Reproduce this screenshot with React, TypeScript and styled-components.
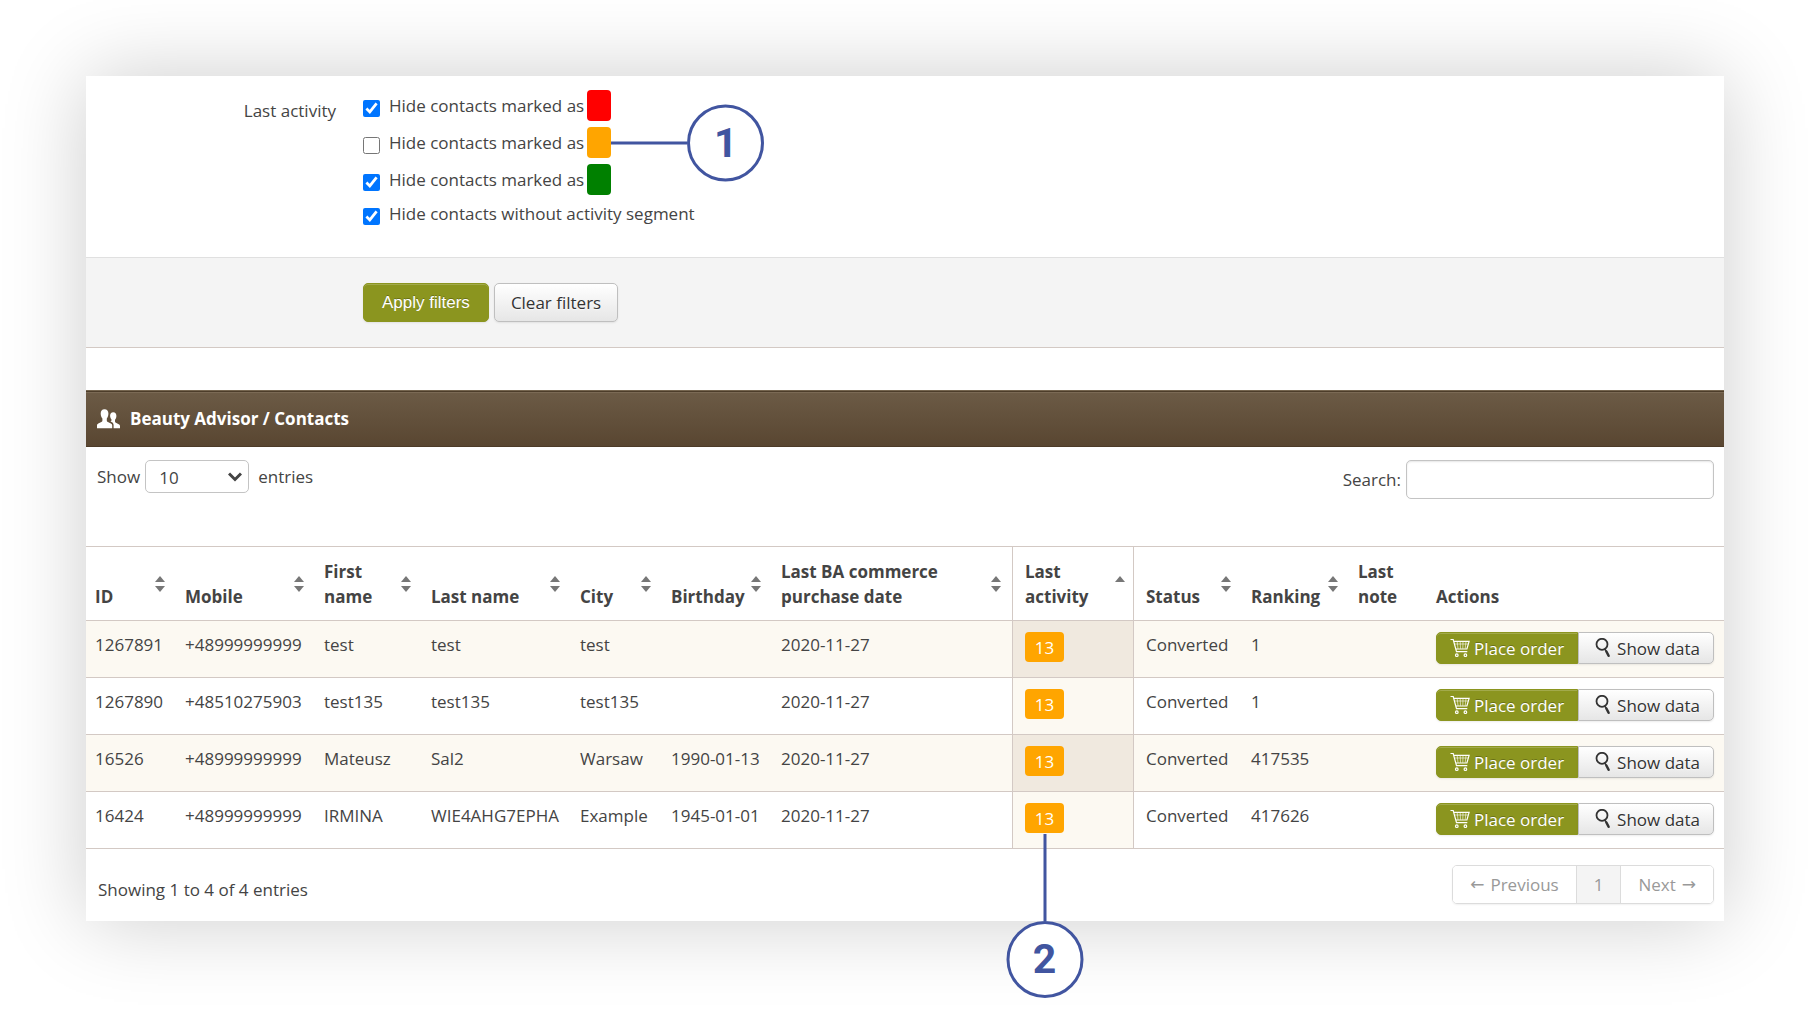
import React from "react";
import styled, { createGlobalStyle, css } from "styled-components";

const line = "#d3c9c4";
const olive = "#8b951f";
const callout = "#4155a0";

const GlobalStyle = createGlobalStyle`
  *, *::before, *::after { box-sizing: border-box; }
  body {
    margin: 0;
    background: #fff;
    color: #444;
    font-family: "Open Sans", "Noto Sans", sans-serif;
    font-size: 17px;
    line-height: 25px;
  }
  button, input, select { font: inherit; color: inherit; margin: 0; }
`;

const Page = styled.main`
  padding: 76px 92px 92px 86px;
`;

const Panel = styled.div`
  background: #fff;
  box-shadow: 0 0 80px rgba(0, 0, 0, 0.2);
`;

const FilterFields = styled.fieldset`
  display: flex;
  gap: 27px;
  margin: 0;
  padding: 14px 0 31px;
  border: 0;
`;

const FieldName = styled.span`
  width: 250px;
  padding-top: 8px;
  text-align: right;
`;

const Options = styled.div`
  display: flex;
  flex-direction: column;
  gap: 6px;
`;

const Option = styled.div`
  display: flex;
  align-items: center;
  gap: 3px;
`;

const OptionLabel = styled.label`
  display: flex;
  align-items: center;
  gap: 9px;
`;

const Checkbox = styled.input`
  width: 17px;
  height: 17px;
  && { margin-top: 5px; }
  accent-color: #0075ff;
`;

const Swatch = styled.span<{ $color: string }>`
  position: relative;
  width: 24px;
  height: 31px;
  border-radius: 4px;
  background: ${(p) => p.$color};
`;

const FilterActions = styled.div`
  display: flex;
  gap: 5px;
  padding: 25px 0 25px 277px;
  border-top: 1px solid #e0e0e0;
  border-bottom: 1px solid ${line};
  background: #f4f4f4;
`;

const greenButton = css`
  border: 1px solid ${olive};
  background: ${olive};
  color: #fff;
  text-shadow: 0 -1px 0 rgba(0, 0, 0, 0.25);
  box-shadow: inset 0 1px 0 rgba(255, 255, 255, 0.2), 0 1px 2px rgba(0, 0, 0, 0.08);
`;

const greyButton = css`
  border: 1px solid #bfbfbf;
  background: linear-gradient(#fff, #e6e6e6);
  color: #333;
  text-shadow: 0 1px 1px rgba(255, 255, 255, 0.75);
  box-shadow: 0 1px 2px rgba(0, 0, 0, 0.08);
`;

const FilterButton = styled.button<{ $primary?: boolean }>`
  height: 39px;
  padding: 0 16px;
  border-radius: 5px;
  ${(p) => (p.$primary ? greenButton : greyButton)}
  ${(p) => p.$primary && css`
    padding: 0 18px;
    font-family: "Liberation Sans", Arial, sans-serif;
  `}
`;

const TitleBar = styled.header`
  display: flex;
  align-items: center;
  gap: 10px;
  height: 57px;
  margin-top: 42px;
  padding: 0 11px;
  border-top: 1px solid #75654f;
  border-bottom: 1px solid #4d3b28;
  background: linear-gradient(#6c5b46, #594631);
  box-shadow: inset 0 1px 0 #4d3d2a, inset 0 2px 0 #7b6a55;
  color: #fff;
`;

const Title = styled.h2`
  margin: 0;
  font-size: 17px;
  font-weight: 700;
`;

const Controls = styled.div`
  display: flex;
  align-items: flex-start;
  justify-content: space-between;
  padding: 13px 10px 47px 11px;
`;

const LengthControl = styled.label`
  display: flex;
  align-items: center;
  gap: 5px;
`;

const SelectBox = styled.span`
  position: relative;
  margin-right: 4px;

  svg {
    position: absolute;
    top: 12px;
    right: 7px;
    pointer-events: none;
  }
`;

const Select = styled.select`
  display: block;
  width: 104px;
  height: 33px;
  padding: 2px 13px 0;
  appearance: none;
  border: 1px solid #c4c4c4;
  border-radius: 5px;
  background: #fff;
`;

const SearchControl = styled.label`
  display: flex;
  align-items: center;
  gap: 5px;
`;

const SearchInput = styled.input`
  width: 308px;
  height: 39px;
  padding: 0 8px;
  border: 1px solid #c4c4c4;
  border-radius: 5px;
  background: #fff;
  box-shadow: inset 0 1px 2px rgba(0, 0, 0, 0.1);
`;

const Table = styled.table`
  width: 100%;
  table-layout: fixed;
  border-collapse: separate;
  border-spacing: 0;
  border-bottom: 1px solid ${line};
`;

type CellProps = { $sorted?: boolean; $afterSorted?: boolean };

const cellEdges = css<CellProps>`
  ${(p) => p.$sorted && css`
    padding-left: 12px;
    padding-right: 8px;
    border-left: 1px solid ${line};
    border-right: 1px solid ${line};
  `}
  ${(p) => p.$afterSorted && css`padding-left: 12px;`}
`;

const HeadCell = styled.th<CellProps>`
  padding: 12px 11px 11px 9px;
  border-top: 1px solid ${line};
  font-weight: 700;
  text-align: left;
  ${cellEdges}
`;

const HeadContent = styled.div`
  display: flex;
  align-items: center;
  justify-content: space-between;
  height: 50px;

  svg { flex: none; }
`;

const HeadLabel = styled.span`
  align-self: flex-end;
`;

const Cell = styled.td<CellProps>`
  padding: 11px 0 13px 9px;
  border-top: 1px solid ${line};
  vertical-align: top;
  ${cellEdges}
`;

const Row = styled.tr`
  &:nth-child(odd) ${Cell} {
    background: #fcf9f2;
  }
  ${Cell}:nth-child(8) {
    background: #fcf9f2;
  }
  &:nth-child(odd) ${Cell}:nth-child(8) {
    background: #f0e9df;
  }
`;

const Badge = styled.span`
  position: relative;
  display: block;
  width: 39px;
  height: 30px;
  padding-top: 3px;
  border-radius: 4px;
  background: orange;
  color: #fff;
  text-align: center;
`;

const RowActions = styled.div`
  display: flex;
  justify-content: flex-end;
  padding-right: 10px;
`;

const ActionButton = styled.button<{ $primary?: boolean }>`
  display: flex;
  align-items: center;
  gap: ${(p) => (p.$primary ? "4px" : "6px")};
  height: 32px;
  padding: ${(p) => (p.$primary ? "0 13px" : "0 13px 0 15px")};
  white-space: nowrap;
  ${(p) => (p.$primary ? greenButton : greyButton)}
  border-radius: ${(p) => (p.$primary ? "5px 0 0 5px" : "0 5px 5px 0")};
`;

const Footer = styled.footer`
  display: flex;
  align-items: flex-start;
  justify-content: space-between;
  padding: 16px 10px 17px 12px;
`;

const Summary = styled.p`
  margin: 0;
  padding-top: 12px;
`;

const Pager = styled.nav`
  display: flex;
  border: 1px solid #dcdcdc;
  border-radius: 5px;
  box-shadow: 0 1px 2px rgba(0, 0, 0, 0.06);
  overflow: hidden;
`;

const PageButton = styled.button<{ $current?: boolean }>`
  display: flex;
  align-items: center;
  gap: 6px;
  height: 37px;
  padding: 0 17px;
  border: 0;
  background: ${(p) => (p.$current ? "#f4f4f4" : "#fff")};
  && { color: #999; }

  & + & { border-left: 1px solid #dcdcdc; }
`;

const Arrow = styled.span`
  font-family: "DejaVu Sans", sans-serif;
`;

const Callout = styled.span<{ $down?: boolean }>`
  position: absolute;
  z-index: 1;
  display: flex;
  align-items: center;
  ${(p) => p.$down
    ? css`flex-direction: column; top: 31px; left: 50%; transform: translateX(-50%);`
    : css`top: 50%; left: 100%; transform: translateY(-50%);`}

  &::before {
    content: "";
    width: ${(p) => (p.$down ? "3px" : "76px")};
    height: ${(p) => (p.$down ? "87px" : "3px")};
    background: ${callout};
  }
`;

const CalloutNumber = styled.strong`
  display: flex;
  align-items: center;
  justify-content: center;
  width: 77px;
  height: 77px;
  border: 3px solid ${callout};
  border-radius: 50%;
  background: #fff;
  color: ${callout};
  font: 700 41px/1 Roboto, Arial, sans-serif;
`;

const PeopleIcon = () => (
  <svg width="23" height="20" viewBox="0 0 23 20" fill="#fff" aria-hidden="true">
    <path d="M7.5 0.3c2.6 0 3.9 1.8 3.9 4.2 0 1.9-.6 3.8-1.6 4.9v2.1c0 .8.4 1.200 1.100 1.600l3 1.500c.9.500 1.300 1.100 1.300 2v2.700H0v-2.700c0-.9.400-1.500 1.300-2l3-1.500c.7-.4 1.100-.8 1.100-1.600V9.400C4.300 8.300 3.700 6.400 3.700 4.500 3.700 2.100 4.900.3 7.500.3z" />
    <path d="M16.200 3.200c2.100 0 3.200 1.600 3.200 3.600 0 1.600-.5 3.100-1.400 4v1.700c0 .6.300 1 .9 1.300l2.800 1.500c.8.400 1.300 1 1.300 1.800v2.200h-6.400v-3.100c0-1.500-.7-2.500-2-3.200l-1.300-.7c.7-.2 1.200-.6 1.200-1.100v-.7c-.8-.8-1.400-2.200-1.400-3.700 0-1.900 1.100-3.600 3.100-3.600z" />
  </svg>
);

const ChevronIcon = () => (
  <svg width="14" height="10" viewBox="0 0 14 10" fill="none" stroke="#444" strokeWidth="3" aria-hidden="true">
    <path d="M1 1.500l6 6 6-6" />
  </svg>
);

const SortIcon = ({ ascending }: { ascending?: boolean }) => (
  <svg width="10" height="16" viewBox="0 0 10 16" fill="#777" aria-hidden="true">
    <path d="M0 6l5-6 5 6z" />
    {!ascending && <path d="M0 10h10l-5 6z" />}
  </svg>
);

const CartIcon = () => (
  <svg width="20" height="20" viewBox="0 0 20 20" fill="none" stroke="#fff" aria-hidden="true">
    <path strokeWidth="1.200" d="M0.500 1.500h2.700l3.300 12.200h10.800M3.800 3.300h15.300l-2.200 7.700H6" />
    <path strokeWidth=".6" d="M7.200 3.500l.8 7.300M10.200 3.500l.3 7.300M13 3.500l-.2 7.300M16 3.500l-.8 7.300M4.700 6h13.500" />
    <circle cx="6.800" cy="17.200" r="1.300" strokeWidth="1.200" />
    <circle cx="15.400" cy="17.200" r="1.300" strokeWidth="1.200" />
  </svg>
);

const SearchIcon = () => (
  <svg width="17" height="20" viewBox="0 0 17 20" fill="none" stroke="#333" aria-hidden="true">
    <circle cx="8" cy="6.300" r="5.500" strokeWidth="1.800" />
    <path strokeWidth="2.500" strokeLinecap="round" d="M12.400 13.500l2.200 4.300" />
    <path strokeWidth="1.500" d="M10.800 10.800l1.600 2.700" />
  </svg>
);

const filters = [
  { id: "hide-red", text: "Hide contacts marked as", color: "red", checked: true },
  { id: "hide-orange", text: "Hide contacts marked as", color: "orange", checked: false, note: "1" },
  { id: "hide-green", text: "Hide contacts marked as", color: "green", checked: true },
  { id: "hide-none", text: "Hide contacts without activity segment", checked: true },
];

const columns: { title: string; width?: number; sort?: "both" | "asc" }[] = [
  { title: "ID", width: 90, sort: "both" },
  { title: "Mobile", width: 139, sort: "both" },
  { title: "First name", width: 107, sort: "both" },
  { title: "Last name", width: 149, sort: "both" },
  { title: "City", width: 91, sort: "both" },
  { title: "Birthday", width: 110, sort: "both" },
  { title: "Last BA commerce purchase date", sort: "both" },
  { title: "Last activity", width: 122, sort: "asc" },
  { title: "Status", width: 108, sort: "both" },
  { title: "Ranking", width: 107, sort: "both" },
  { title: "Last note", width: 78 },
  { title: "Actions", width: 297 },
];

const contacts = [
  { id: "1267891", mobile: "+48999999999", first: "test", last: "test", city: "test", born: "", bought: "2020-11-27", activity: "13", status: "Converted", rank: "1" },
  { id: "1267890", mobile: "+48510275903", first: "test135", last: "test135", city: "test135", born: "", bought: "2020-11-27", activity: "13", status: "Converted", rank: "1" },
  { id: "16526", mobile: "+48999999999", first: "Mateusz", last: "Sal2", city: "Warsaw", born: "1990-01-13", bought: "2020-11-27", activity: "13", status: "Converted", rank: "417535" },
  { id: "16424", mobile: "+48999999999", first: "IRMINA", last: "WIE4AHG7EPHA", city: "Example", born: "1945-01-01", bought: "2020-11-27", activity: "13", status: "Converted", rank: "417626", note: "2" },
];

export default function App() {
  return (
    <>
      <GlobalStyle />
      <Page>
        <Panel>
          <form onSubmit={(e) => e.preventDefault()}>
            <FilterFields aria-labelledby="activity-name">
              <FieldName id="activity-name">Last activity</FieldName>
              <Options>
                {filters.map((f) => (
                  <Option key={f.id}>
                    <OptionLabel htmlFor={f.id}>
                      <Checkbox id={f.id} type="checkbox" defaultChecked={f.checked} />
                      {f.text}
                    </OptionLabel>
                    {f.color && (
                      <Swatch $color={f.color}>
                        {f.note && (
                          <Callout>
                            <CalloutNumber>{f.note}</CalloutNumber>
                          </Callout>
                        )}
                      </Swatch>
                    )}
                  </Option>
                ))}
              </Options>
            </FilterFields>
            <FilterActions>
              <FilterButton type="submit" $primary>Apply filters</FilterButton>
              <FilterButton type="reset">Clear filters</FilterButton>
            </FilterActions>
          </form>

          <TitleBar>
            <PeopleIcon />
            <Title>Beauty Advisor / Contacts</Title>
          </TitleBar>

          <Controls>
            <LengthControl>
              Show
              <SelectBox>
                <Select defaultValue="10">
                  <option>10</option>
                  <option>25</option>
                  <option>50</option>
                </Select>
                <ChevronIcon />
              </SelectBox>
              entries
            </LengthControl>
            <SearchControl>
              Search:
              <SearchInput type="search" />
            </SearchControl>
          </Controls>

          <Table>
            <colgroup>
              {columns.map((c) => (
                <col key={c.title} width={c.width} />
              ))}
            </colgroup>
            <thead>
              <tr>
                {columns.map((c) => (
                  <HeadCell
                    key={c.title}
                    scope="col"
                    $sorted={c.sort === "asc"}
                    $afterSorted={c.title === "Status"}
                    aria-sort={c.sort === "asc" ? "ascending" : undefined}
                  >
                    <HeadContent>
                      <HeadLabel>{c.title}</HeadLabel>
                      {c.sort && <SortIcon ascending={c.sort === "asc"} />}
                    </HeadContent>
                  </HeadCell>
                ))}
              </tr>
            </thead>
            <tbody>
              {contacts.map((c) => (
                <Row key={c.id}>
                  <Cell>{c.id}</Cell>
                  <Cell>{c.mobile}</Cell>
                  <Cell>{c.first}</Cell>
                  <Cell>{c.last}</Cell>
                  <Cell>{c.city}</Cell>
                  <Cell>{c.born}</Cell>
                  <Cell>{c.bought}</Cell>
                  <Cell $sorted>
                    <Badge>
                      {c.activity}
                      {c.note && (
                        <Callout $down>
                          <CalloutNumber>{c.note}</CalloutNumber>
                        </Callout>
                      )}
                    </Badge>
                  </Cell>
                  <Cell $afterSorted>{c.status}</Cell>
                  <Cell>{c.rank}</Cell>
                  <Cell />
                  <Cell>
                    <RowActions>
                      <ActionButton type="button" $primary>
                        <CartIcon />
                        Place order
                      </ActionButton>
                      <ActionButton type="button">
                        <SearchIcon />
                        Show data
                      </ActionButton>
                    </RowActions>
                  </Cell>
                </Row>
              ))}
            </tbody>
          </Table>

          <Footer>
            <Summary>Showing 1 to 4 of 4 entries</Summary>
            <Pager aria-label="Pages">
              <PageButton type="button"><Arrow>←</Arrow> Previous</PageButton>
              <PageButton type="button" $current>1</PageButton>
              <PageButton type="button">Next <Arrow>→</Arrow></PageButton>
            </Pager>
          </Footer>
        </Panel>
      </Page>
    </>
  );
}
